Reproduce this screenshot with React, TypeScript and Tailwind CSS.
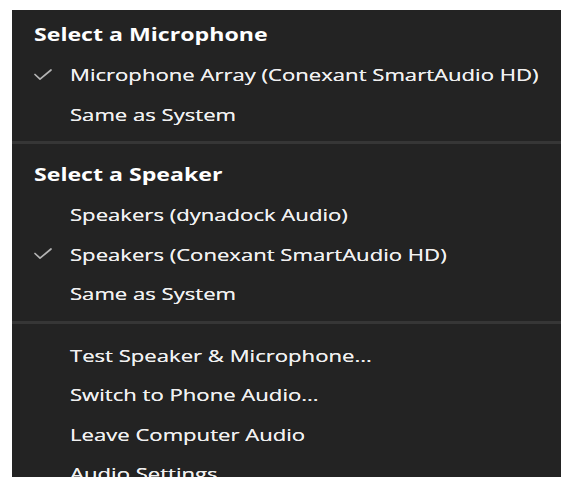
type Item = { label: string; checked?: boolean };

const microphones: Item[] = [
  { label: 'Microphone Array (Conexant SmartAudio HD)', checked: true },
  { label: 'Same as System' },
];

const speakers: Item[] = [
  { label: 'Speakers (dynadock Audio)' },
  { label: 'Speakers (Conexant SmartAudio HD)', checked: true },
  { label: 'Same as System' },
];

const actions: Item[] = [
  { label: 'Test Speaker & Microphone...' },
  { label: 'Switch to Phone Audio...' },
  { label: 'Leave Computer Audio' },
  { label: 'Audio Settings' },
];

function CheckMark() {
  return (
    <svg width="18" height="12" viewBox="0 0 18 12" fill="none" className="text-[#b4b4b4]">
      <polyline
        points="1,5.5 6,10.2 17,1"
        stroke="currentColor"
        strokeWidth="1.7"
        strokeLinecap="round"
        strokeLinejoin="round"
      />
    </svg>
  );
}

function Header({ title }: { title: string }) {
  return (
    <div className="h-[40px] flex items-center pl-[22px] text-[17px] font-bold text-white">
      <span className="inline-block origin-left scale-x-[1.36] whitespace-nowrap">{title}</span>
    </div>
  );
}

function MenuItem({ item }: { item: Item }) {
  return (
    <div className="h-[39.5px] flex items-center text-[17px] text-[#f0f0f0]">
      <div className="w-[58px] shrink-0 flex justify-start pl-[22px]">
        {item.checked && <CheckMark />}
      </div>
      <span className="inline-block origin-left scale-x-[1.3] whitespace-nowrap [text-shadow:0_0_0.4px_#f0f0f0]">
        {item.label}
      </span>
    </div>
  );
}

function Divider() {
  return <div className="h-[3px] bg-[#363636]" />;
}

export default function App() {
  return (
    <div className="w-[565px] h-[477px] bg-white pl-[12px] pt-[10px] pr-[4px] overflow-hidden">
      <div
        className="h-full bg-[#232323] overflow-hidden"
        style={{ fontFamily: '"Open Sans", "Noto Sans", sans-serif' }}
      >
        <div className="pt-[5px] pb-[7px]">
          <Header title="Select a Microphone" />
          {microphones.map((m) => (
            <MenuItem key={m.label} item={m} />
          ))}
        </div>
        <Divider />
        <div className="pt-[11px] pb-[7px]">
          <Header title="Select a Speaker" />
          {speakers.map((s) => (
            <MenuItem key={s.label} item={s} />
          ))}
        </div>
        <Divider />
        <div className="pt-[12px]">
          {actions.map((a) => (
            <MenuItem key={a.label} item={a} />
          ))}
        </div>
      </div>
    </div>
  );
}
